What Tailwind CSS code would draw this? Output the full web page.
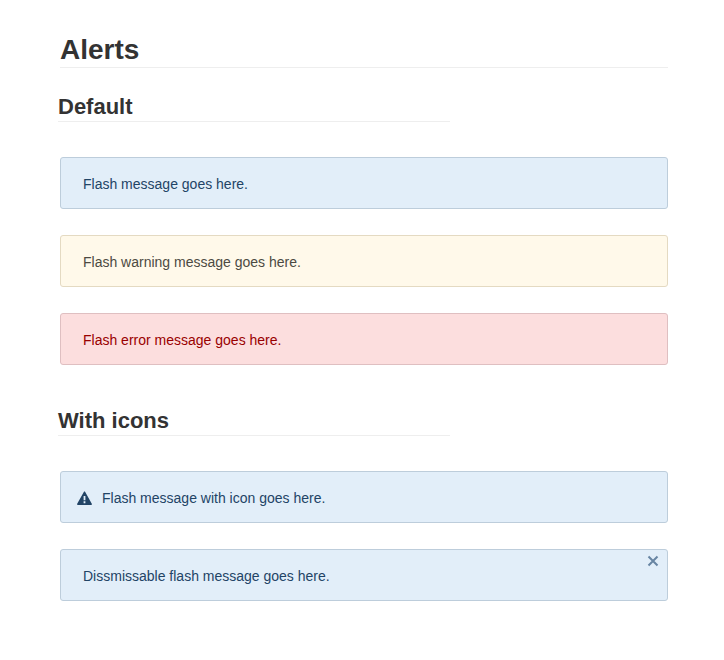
<!DOCTYPE html>
<html lang="en">
<head>
<meta charset="utf-8">
<meta name="viewport" content="width=device-width, initial-scale=1">
<title>Alerts</title>
<script src="https://cdn.jsdelivr.net/npm/@tailwindcss/browser@4"></script>
</head>
<body class="bg-white font-['Liberation_Sans',Arial,sans-serif] text-[#333333]">
<main class="pl-[60px] pr-14 pt-8">
  <h1 class="border-b border-[#eeeeee] text-[28px] font-bold leading-[35px]">Alerts</h1>
  <section class="pt-6">
    <h2 class="-ml-0.5 max-w-[392px] border-b border-[#eeeeee] text-[22px] font-bold leading-[29px]">Default</h2>
    <div class="mt-[35px] flex flex-col gap-[26px] text-[14px] leading-[20px]">
      <div role="status" class="flex items-center rounded-[3px] border border-[#bdcddb] bg-[#e2eef9] px-[22px] pt-4 pb-3.5 text-[#224466]">Flash message goes here.</div>
      <div role="status" class="flex items-center rounded-[3px] border border-[#e4dac2] bg-[#fff9ea] px-[22px] pt-4 pb-3.5 text-[#4c4a42]">Flash warning message goes here.</div>
      <div role="alert" class="flex items-center rounded-[3px] border border-[#dfbfc1] bg-[#fcdede] px-[22px] pt-4 pb-3.5 text-[#990000]">Flash error message goes here.</div>
    </div>
  </section>
  <section class="pt-[41px]">
    <h2 class="-ml-0.5 max-w-[392px] border-b border-[#eeeeee] text-[22px] font-bold leading-[29px]">With icons</h2>
    <div class="mt-[35px] flex flex-col gap-[26px] text-[14px] leading-[20px]">
      <div role="status" class="flex items-center gap-2.5 rounded-[3px] border border-[#bdcddb] bg-[#e2eef9] px-4 pt-4 pb-3.5 text-[#224466]">
        <svg class="size-[15px]" viewBox="0 0 15 15" fill="currentColor" aria-hidden="true"><path fill-rule="evenodd" d="M8.2.9c-.3-.5-1.1-.5-1.4 0L.2 12.8c-.4.6 0 1.2.7 1.2h13.2c.7 0 1.1-.6.7-1.2zM6.6 5h1.8v4.3H6.6zm0 5.3h1.8v1.9H6.6z"/></svg>
        <span>Flash message with icon goes here.</span>
      </div>
      <div role="status" class="relative flex items-center rounded-[3px] border border-[#bdcddb] bg-[#e2eef9] px-[22px] pt-4 pb-3.5 text-[#224466]">
        <span>Dissmissable flash message goes here.</span>
        <button type="button" aria-label="Dismiss" class="absolute right-1.5 top-[3px] flex size-4 items-center justify-center text-[#6885a3]">
          <svg class="size-3" viewBox="0 0 12 12" fill="none" stroke="currentColor" stroke-width="2" aria-hidden="true"><path d="M1.5 1.5l9 9M10.5 1.5l-9 9"/></svg>
        </button>
      </div>
    </div>
  </section>
</main>
</body>
</html>
